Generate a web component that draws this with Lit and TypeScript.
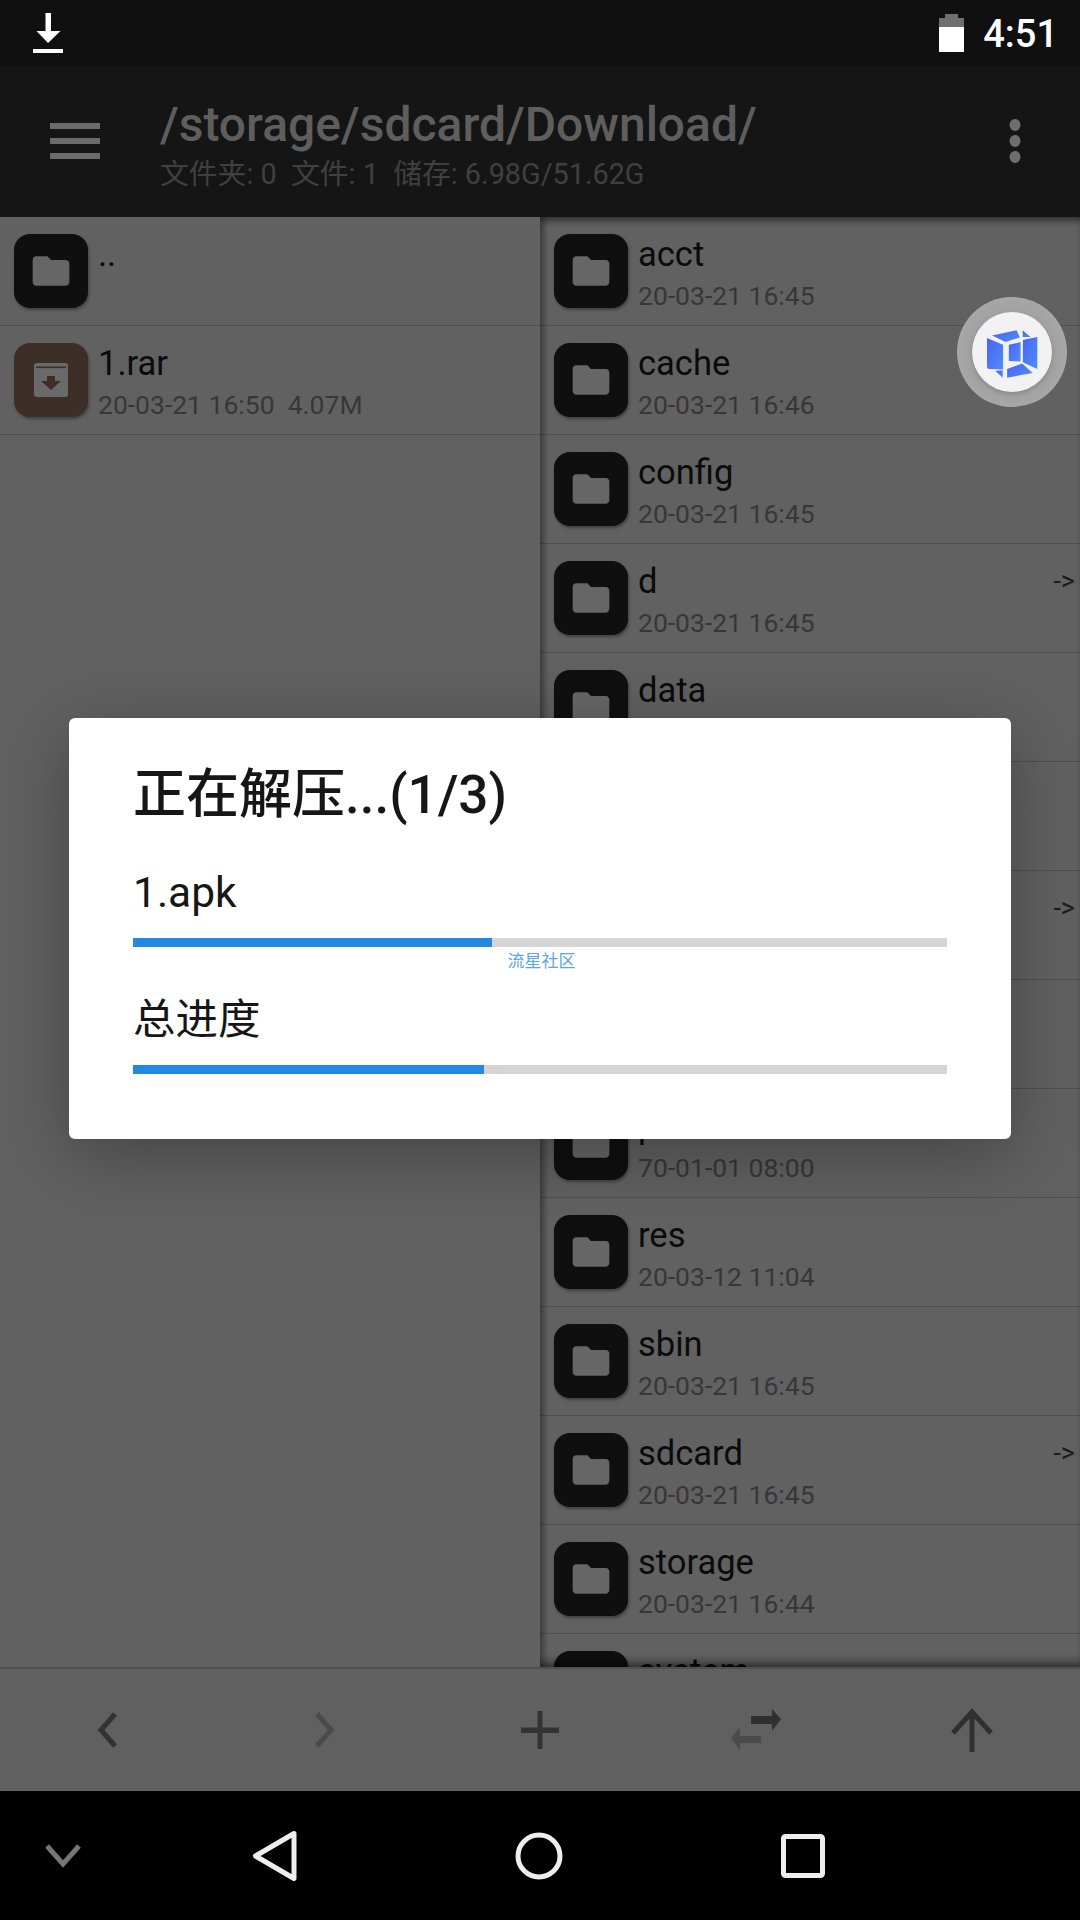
import { LitElement, html, css, svg } from "lit";
import { customElement } from "lit/decorators.js";

type Row = { name: string; date: string; link?: boolean; kind?: "folder" | "archive" };

const LEFT: Row[] = [
  { name: "..", date: "" },
  { name: "1.rar", date: "20-03-21 16:50  4.07M", kind: "archive" },
];
const RIGHT: Row[] = [
  { name: "acct", date: "20-03-21 16:45" },
  { name: "cache", date: "20-03-21 16:46" },
  { name: "config", date: "20-03-21 16:45" },
  { name: "d", date: "20-03-21 16:45", link: true },
  { name: "data", date: "20-03-21 16:45" },
  { name: "dev", date: "20-03-21 16:45" },
  { name: "etc", date: "20-03-21 16:45", link: true },
  { name: "mnt", date: "20-03-21 16:45" },
  { name: "proc", date: "70-01-01 08:00" },
  { name: "res", date: "20-03-12 11:04" },
  { name: "sbin", date: "20-03-21 16:45" },
  { name: "sdcard", date: "20-03-21 16:45", link: true },
  { name: "storage", date: "20-03-21 16:44" },
  { name: "system", date: "20-03-21 16:45" },
];

const folderIcon = svg`<svg class="glyph" width="44" height="44" viewBox="0 0 24 24"><path fill="#666" d="M10 4H4c-1.1 0-2 .9-2 2v12c0 1.1.9 2 2 2h16c1.1 0 2-.9 2-2V8c0-1.1-.9-2-2-2h-8l-2-2z"/></svg>`;
const archiveIcon = svg`<svg class="glyph" width="44" height="44" viewBox="0 0 44 44"><rect x="5" y="5" width="34" height="34" rx="3" fill="#6a6a6a"/><rect x="7" y="8.5" width="30" height="1.6" fill="#3d2e27"/><path fill="#3d2e27" d="M18 18h8v5h6L22 32 12 23h6z"/></svg>`;

@customElement("app-root")
export class AppRoot extends LitElement {
  static styles = css`
    :host {
      display: block;
      width: 1080px;
      height: 1920px;
      font-family: Roboto, "Noto Sans CJK SC", sans-serif;
    }
    .screen {
      position: relative;
      width: 1080px;
      height: 1920px;
      display: flex;
      flex-direction: column;
      background: #616161;
      overflow: hidden;
    }
    .status {
      height: 66px;
      flex: none;
      background: #101010;
      display: flex;
      align-items: center;
      padding: 0 22px 0 33px;
    }
    .status-spacer { flex: 1; }
    .status svg { display: block; }
    .dl { margin-top: 2px; }
    .time {
      color: #fff;
      font-size: 38px;
      font-weight: 500;
      line-height: 1;
      margin-left: 19px;
      margin-top: 2px;
    }
    .toolbar {
      height: 151px;
      flex: none;
      background: #151515;
      display: flex;
      align-items: flex-start;
    }
    .menu { margin: 57px 0 0 50px; flex: none; display: block; }
    .heading { margin-left: 60px; flex: 1; padding-top: 34px; }
    .path { font-size: 48px; font-weight: 500; line-height: 50px; color: #5e5e5e; }
    .meta {
      font-size: 28.800px;
      line-height: 34px;
      color: #404040;
      margin-top: 7px;
      white-space: pre;
    }
    .more { margin: 53px 59px 0 0; flex: none; display: block; }
    .panes { flex: 1; display: flex; min-height: 0; }
    .pane { position: relative; overflow: hidden; }
    .pane.left { width: 540px; flex: none; }
    .pane.right { flex: 1; }
    .pane.right::before {
      content: "";
      position: absolute;
      inset: 0;
      z-index: 1;
      box-shadow:
        inset 6px 0 5px -1px rgba(0, 0, 0, 0.28),
        inset 0 9px 7px -5px rgba(0, 0, 0, 0.45),
        inset 0 -10px 8px -5px rgba(0, 0, 0, 0.45);
      pointer-events: none;
    }
    .row {
      height: 109px;
      box-sizing: border-box;
      border-bottom: 1.5px solid #4f4f4f;
      display: flex;
      align-items: flex-start;
      padding-left: 14px;
    }
    .icon {
      width: 74px;
      height: 74px;
      flex: none;
      margin-top: 17px;
      border-radius: 16px;
      background: #0f0f0f;
      box-shadow: 1px 2px 3px rgba(0, 0, 0, 0.35);
      display: flex;
      align-items: center;
      justify-content: center;
    }
    .icon.archive { background: #3d2e27; }
    .glyph { display: block; }
    .text { margin-left: 10px; flex: 1; padding-top: 17px; min-width: 0; }
    .name { font-size: 34.500px; line-height: 40px; color: #0b0b0b; white-space: nowrap; }
    .date {
      font-size: 26.500px;
      line-height: 32px;
      margin-top: 6px;
      color: #373737;
      white-space: pre;
    }
    .link {
      flex: none;
      font-size: 27px;
      line-height: 30px;
      color: #1c1c1c;
      margin: 22px 5px 0 0;
    }
    .bottom {
      height: 124px;
      flex: none;
      box-sizing: border-box;
      border-top: 2px solid #505050;
      background: #606060;
      display: flex;
    }
    .cell { flex: 1; display: flex; align-items: center; justify-content: center; }
    .cell svg { display: block; }
    .nav {
      height: 129px;
      flex: none;
      background: #000;
      display: flex;
      align-items: center;
    }
    .nav-item { display: flex; justify-content: center; width: 264px; flex: none; }
    .nav-item.hide { width: 126px; margin-right: 17px; }
    .nav svg { display: block; }
    .fab {
      position: absolute;
      left: 957px;
      top: 297px;
      width: 110px;
      height: 110px;
      border-radius: 50%;
      background: #a3a3a3;
      box-shadow: inset 0 0 12px rgba(255, 255, 255, 0.12);
      display: flex;
      align-items: center;
      justify-content: center;
      z-index: 2;
    }
    .fab-inner {
      width: 80px;
      height: 80px;
      border-radius: 50%;
      background: #f2f2f4;
      box-shadow: 0 2px 5px rgba(0, 0, 0, 0.18);
      display: flex;
      align-items: center;
      justify-content: center;
    }
    .dialog {
      position: absolute;
      left: 69px;
      top: 718px;
      width: 942px;
      height: 421px;
      box-sizing: border-box;
      padding: 42px 64px 0 64px;
      background: #fff;
      border-radius: 6px;
      box-shadow: 0 16px 70px rgba(0, 0, 0, 0.3);
      z-index: 3;
    }
    .title {
      font-size: 53px;
      font-weight: 500;
      line-height: 70px;
      color: #161616;
      white-space: nowrap;
    }
    .label {
      font-size: 42.500px;
      line-height: 50px;
      color: #161616;
    }
    .label.first { margin-top: 38px; }
    .bar {
      height: 9px;
      background: #d5d5d5;
      margin-top: 20px;
    }
    .bar > div { height: 100%; background: #2288e0; }
    .mark {
      font-size: 17px;
      line-height: 20px;
      color: #5aa6e4;
      text-align: center;
      margin-top: 4px;
      padding-left: 3px;
    }
    .label.second { margin-top: 24px; }
  `;

  private row(r: Row) {
    return html`<div class="row">
      <div class="icon ${r.kind === "archive" ? "archive" : ""}">
        ${r.kind === "archive" ? archiveIcon : folderIcon}
      </div>
      <div class="text">
        <div class="name">${r.name}</div>
        ${r.date ? html`<div class="date">${r.date}</div>` : ""}
      </div>
      ${r.link ? html`<div class="link">-&gt;</div>` : ""}
    </div>`;
  }

  render() {
    return html`<div class="screen">
      <div class="status">
        <svg class="dl" width="30" height="42" viewBox="0 0 30 42">
          <path fill="#fff" d="M12.500 0h5.500v18h9.500L15 30 3.500 18h9z" />
          <rect x="0" y="36" width="30" height="4" fill="#fff" />
        </svg>
        <div class="status-spacer"></div>
        <svg width="25" height="38" viewBox="0 0 25 38">
          <path fill="#6f6f6f" d="M6 0h13v4h6v9H0V4h6z" />
          <rect x="0" y="13" width="25" height="25" fill="#fff" />
        </svg>
        <div class="time">4:51</div>
      </div>

      <div class="toolbar">
        <svg class="menu" width="50" height="36" viewBox="0 0 50 36">
          <g fill="#6b6b6b">
            <rect width="50" height="6" />
            <rect y="15" width="50" height="6" />
            <rect y="30" width="50" height="6" />
          </g>
        </svg>
        <div class="heading">
          <div class="path">/storage/sdcard/Download/</div>
          <div class="meta">文件夹: 0  文件: 1  储存: 6.98G/51.62G</div>
        </div>
        <svg class="more" width="12" height="44" viewBox="0 0 12 44">
          <g fill="#6e6e6e">
            <ellipse cx="6" cy="6" rx="5.500" ry="6" />
            <ellipse cx="6" cy="22" rx="5.500" ry="6" />
            <ellipse cx="6" cy="38" rx="5.500" ry="6" />
          </g>
        </svg>
      </div>

      <div class="panes">
        <div class="pane left">${LEFT.map((r) => this.row(r))}</div>
        <div class="pane right">${RIGHT.map((r) => this.row(r))}</div>
      </div>

      <div class="bottom">
        <div class="cell">
          <svg width="44" height="44" viewBox="0 0 44 44">
            <path d="M30 6 L16 22 L30 38" transform="translate(-1 0)" fill="none" stroke="#333" stroke-width="5" />
          </svg>
        </div>
        <div class="cell">
          <svg width="44" height="44" viewBox="0 0 44 44">
            <path d="M15 6 L29 22 L15 38" fill="none" stroke="#4b4b4b" stroke-width="5" />
          </svg>
        </div>
        <div class="cell">
          <svg width="44" height="44" viewBox="0 0 44 44">
            <path fill="#333" d="M19.500 3h5v16.500H41v5.500H24.500v16h-5V25H3v-5.500h16.500z" />
          </svg>
        </div>
        <div class="cell">
          <svg width="56" height="44" viewBox="0 0 56 44">
            <path fill="#303030" d="M23 8h21V1l9 10-9 12v-7H23z" />
            <path fill="#4b4b4b" d="M33 28H12v-9L3 30l9 12v-7h21z" />
          </svg>
        </div>
        <div class="cell">
          <svg width="44" height="44" viewBox="0 0 44 44">
            <path d="M22 44V4M3 25 L22 4 L41 25" fill="none" stroke="#303030" stroke-width="5" />
          </svg>
        </div>
      </div>

      <div class="nav">
        <div class="nav-item hide">
          <svg width="38" height="24" viewBox="0 0 38 24">
            <path d="M3 2 L19 20 L35 2" fill="none" stroke="#767676" stroke-width="5" />
          </svg>
        </div>
        <div class="nav-item">
          <svg width="46" height="52" viewBox="0 0 46 52">
            <path d="M42 3.500 L3.500 26 L42 48.500 Z" fill="none" stroke="#eee" stroke-width="5" stroke-linejoin="round" />
          </svg>
        </div>
        <div class="nav-item">
          <svg width="48" height="48" viewBox="0 0 48 48">
            <circle cx="24" cy="24" r="21" fill="none" stroke="#eee" stroke-width="5" />
          </svg>
        </div>
        <div class="nav-item">
          <svg width="44" height="44" viewBox="0 0 44 44">
            <rect x="2.500" y="2.500" width="39" height="39" rx="2" fill="none" stroke="#eee" stroke-width="5" />
          </svg>
        </div>
      </div>

      <div class="fab">
        <div class="fab-inner">
          <svg width="57" height="57" viewBox="131 116 170 170">
            <defs>
              <linearGradient id="cube" x1="0" y1="0" x2="1" y2="1">
                <stop offset="0" stop-color="#4a63ee" />
                <stop offset="1" stop-color="#4f8dfb" />
              </linearGradient>
            </defs>
            <g fill="url(#cube)">
              <path d="M140 158 L188 178 V252 L146 250 Q140 250 140 244 Z" />
              <path d="M155 150 L228 135 L238 156 L195 170 Z" />
              <path d="M246 135 L270 155 L247 155 Z" />
              <path d="M247 164 L290 155 V250 L247 230 Z" />
              <path d="M205 178 L240 170 V228 L205 226 Z" />
              <path d="M200 250 L245 234 L276 262 L200 276 Z" />
              <path d="M165 256 L187 254 V276 Z" />
            </g>
          </svg>
        </div>
      </div>

      <div class="dialog">
        <div class="title">正在解压...(1/3)</div>
        <div class="label first">1.apk</div>
        <div class="bar"><div style="width:${(359 / 814) * 100}%"></div></div>
        <div class="mark">流星社区</div>
        <div class="label second">总进度</div>
        <div class="bar"><div style="width:${(351 / 814) * 100}%"></div></div>
      </div>
    </div>`;
  }
}
